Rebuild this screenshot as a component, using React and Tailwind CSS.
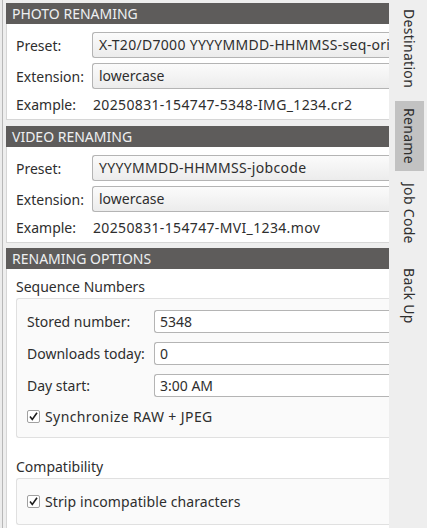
import React from "react";

const font = { fontFamily: '"Noto Sans", "Open Sans", sans-serif' };

function Header({ children }) {
  return (
    <div className="h-[21px] bg-[#5e5c5b] text-[#eef0f2] text-[14px] leading-[21px] pl-[6px]">
      {children}
    </div>
  );
}

function Combo({ children, wide }) {
  return (
    <div className={`flex-1 h-[26px] rounded-l-[3px] border border-r-0 border-[#b4b4b4] bg-gradient-to-b from-[#fbfbfb] to-[#ececec] pl-[6px] text-[14px] leading-[24px] text-[#2e2e2e] whitespace-nowrap overflow-hidden ${wide ? "tracking-[0.3px]" : ""}`}>
      {children}
    </div>
  );
}

function Input({ children }) {
  return (
    <div className="flex-1 h-[23px] rounded-l-[3px] border border-r-0 border-[#b4b4b4] bg-white pl-[5px] text-[14px] leading-[21px] text-[#2e2e2e] whitespace-nowrap overflow-hidden">
      {children}
    </div>
  );
}

function Check({ children, wide }) {
  return (
    <div className="flex items-center h-[20px] gap-[5px] text-[14px] text-[#2e2e2e]">
      <div className="w-[13px] h-[13px] border border-[#a0a0a0] rounded-[2px] bg-white flex items-center justify-center">
        <svg width="11" height="11" viewBox="0 0 11 11">
          <path d="M2 5.5 L4.3 8.5 L9 1.8" fill="none" stroke="#1e1e1e" strokeWidth="1.6" />
        </svg>
      </div>
      <span className={wide ? "tracking-[0.4px]" : "tracking-[0.1px]"}>{children}</span>
    </div>
  );
}

function RenamePanel({ title, preset, example }) {
  return (
    <div>
      <Header>{title}</Header>
      <div className="bg-white border-l border-b border-[#d6d6d6] pl-[9px] pt-[8px] pb-[2px]">
        <div className="flex items-center h-[26px]">
          <div className="w-[76px] text-[14px] text-[#2e2e2e]">Preset:</div>
          <Combo wide>{preset}</Combo>
        </div>
        <div className="flex items-center h-[26px] mt-[5px]">
          <div className="w-[76px] text-[14px] text-[#2e2e2e]">Extension:</div>
          <Combo>lowercase</Combo>
        </div>
        <div className="flex items-center h-[26px] mt-[2px]">
          <div className="w-[76px] text-[14px] text-[#2e2e2e]">Example:</div>
          <div className="text-[14px] text-[#2e2e2e] pl-[1px] whitespace-nowrap tracking-[0.35px]">{example}</div>
        </div>
      </div>
    </div>
  );
}

function Tab({ children, active, h, mt, pt }) {
  return (
    <div
      className={`w-[29px] flex justify-center text-[14px] text-[#2e2e2e] ${active ? "bg-[#c2c2c2]" : ""}`}
      style={{ height: h, marginTop: mt }}
    >
      <span className="[writing-mode:vertical-rl] tracking-[0.3px]" style={{ paddingTop: pt }}>{children}</span>
    </div>
  );
}

export default function App() {
  return (
    <div className="w-[427px] h-[528px] bg-[#eeeeee] flex overflow-hidden" style={font}>
      <div className="w-[389px] flex shrink-0">
        <div className="w-[3px] shrink-0 border-r border-[#b8b8b8] bg-[#ececec]"></div>
        <div className="flex-1 pl-[3px] pt-[3px] overflow-hidden">
          <RenamePanel
            title="PHOTO RENAMING"
            preset="X-T20/D7000 YYYYMMDD-HHMMSS-seq-original"
            example="20250831-154747-5348-IMG_1234.cr2"
          />
          <div className="h-[6px]"></div>
          <RenamePanel
            title="VIDEO RENAMING"
            preset="YYYYMMDD-HHMMSS-jobcode"
            example="20250831-154747-MVI_1234.mov"
          />
          <div className="h-[5px]"></div>
          <Header>RENAMING OPTIONS</Header>
          <div className="bg-white border-l border-[#d6d6d6] pl-[9px] pt-[8px] pb-[10px] text-[#2e2e2e]">
            <div className="text-[14px] h-[20px] leading-[20px]">Sequence Numbers</div>
            <div className="mt-[1px] border border-r-0 border-[#e0e0e0] rounded-l-[3px] bg-[#fafafa] pl-[10px] pt-[11px] pb-[11px]">
              <div className="flex items-center h-[23px]">
                <div className="w-[127px] text-[14px]">Stored number:</div>
                <Input>5348</Input>
              </div>
              <div className="flex items-center h-[23px] mt-[9px]">
                <div className="w-[127px] text-[14px]">Downloads today:</div>
                <Input>0</Input>
              </div>
              <div className="flex items-center h-[23px] mt-[9px]">
                <div className="w-[127px] text-[14px]">Day start:</div>
                <Input>3:00 AM</Input>
              </div>
              <div className="mt-[9px]">
                <Check wide>Synchronize RAW + JPEG</Check>
              </div>
            </div>
            <div className="text-[14px] h-[20px] leading-[20px] mt-[19px]">Compatibility</div>
            <div className="mt-[1px] border border-r-0 border-[#e0e0e0] rounded-l-[3px] bg-[#fafafa] pl-[10px] pt-[12px] pb-[13px]">
              <Check>Strip incompatible characters</Check>
            </div>
          </div>
        </div>
      </div>
      <div className="flex-1 flex flex-col pl-[6px]">
        <Tab h={95} mt={0} pt={9}>Destination</Tab>
        <Tab active h={70} mt={6} pt={7}>Rename</Tab>
        <Tab h={85} mt={0} pt={12}>Job Code</Tab>
        <Tab h={70} mt={0} pt={12}>Back Up</Tab>
      </div>
    </div>
  );
}
